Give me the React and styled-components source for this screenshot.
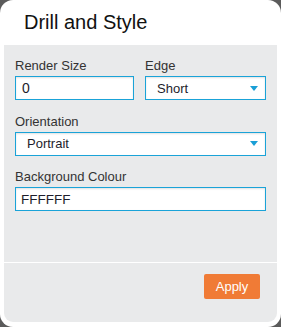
import React from "react";
import styled, { createGlobalStyle } from "styled-components";

const Global = createGlobalStyle`
  html, body { margin: 0; padding: 0; background: #5b5b5b; }
  body { font-family: "Liberation Sans", Arial, sans-serif; }
  * { box-sizing: border-box; }
`;

const Card = styled.div`
  width: 281px;
  height: 327px;
  background: #fff;
  border-radius: 13px;
  padding: 0 4px 5px;
  display: flex;
  flex-direction: column;
`;

const Header = styled.div`
  height: 45px;
  flex: none;
  padding: 11px 0 0 20px;
`;

const Title = styled.h1`
  margin: 0;
  font-size: 20px;
  line-height: 23px;
  font-weight: 400;
  color: #111;
`;

const Panel = styled.div`
  flex: 1;
  background: #e9eaeb;
  border-radius: 0 0 9px 9px;
  display: flex;
  flex-direction: column;
`;

const Form = styled.div`
  height: 218px;
  padding: 13px 11px 0;
  display: flex;
  flex-direction: column;
  gap: 13.5px;
  border-bottom: 1px solid #fff;
`;

const Row = styled.div`
  display: grid;
  grid-template-columns: ${(p) => p.$cols || "1fr"};
  column-gap: 11px;
`;

const Field = styled.div`
  display: flex;
  flex-direction: column;
`;

const Label = styled.label`
  font-size: 13px;
  line-height: 15px;
  color: #333;
  margin-bottom: 3px;
`;

const Box = styled.div`
  height: 24px;
  border: 1px solid #1aa3d8;
  background: #fff;
  box-shadow: inset 0 1px 2px rgba(0, 0, 0, 0.12);
  display: flex;
  align-items: center;
  font-size: 13px;
  color: #1d1d2b;
  padding-left: ${(p) => p.$pad || 5}px;
  padding-right: 7px;
`;

const Value = styled.span`
  flex: 1;
  font-size: ${(p) => p.$size || 13}px;
`;

const Arrow = styled.svg`
  width: 8px;
  height: 5px;
  flex: none;
`;

const Footer = styled.div`
  flex: 1;
  display: flex;
  justify-content: flex-end;
  align-items: flex-start;
  padding: 11px 17px 0 0;
`;

const Button = styled.button`
  height: 25px;
  width: 56px;
  border: none;
  border-radius: 2px;
  background: #f07b36;
  color: #fff;
  font-family: "Liberation Sans", Arial, sans-serif;
  font-size: 13px;
  padding: 0;
`;

const Caret = () => (
  <Arrow viewBox="0 0 8 5">
    <path d="M0 0H8L4 5Z" fill="#1a9fd6" />
  </Arrow>
);

export default function App() {
  return (
    <>
      <Global />
      <Card>
        <Header>
          <Title>Drill and Style</Title>
        </Header>
        <Panel>
          <Form>
            <Row $cols="119px 1fr">
              <Field>
                <Label>Render Size</Label>
                <Box $pad={6}>
                  <Value $size={14}>0</Value>
                </Box>
              </Field>
              <Field>
                <Label>Edge</Label>
                <Box $pad={11}>
                  <Value>Short</Value>
                  <Caret />
                </Box>
              </Field>
            </Row>
            <Row>
              <Field>
                <Label>Orientation</Label>
                <Box $pad={11}>
                  <Value>Portrait</Value>
                  <Caret />
                </Box>
              </Field>
            </Row>
            <Row>
              <Field>
                <Label>Background Colour</Label>
                <Box $pad={5}>
                  <Value $size={13.5}>FFFFFF</Value>
                </Box>
              </Field>
            </Row>
          </Form>
          <Footer>
            <Button>Apply</Button>
          </Footer>
        </Panel>
      </Card>
    </>
  );
}
